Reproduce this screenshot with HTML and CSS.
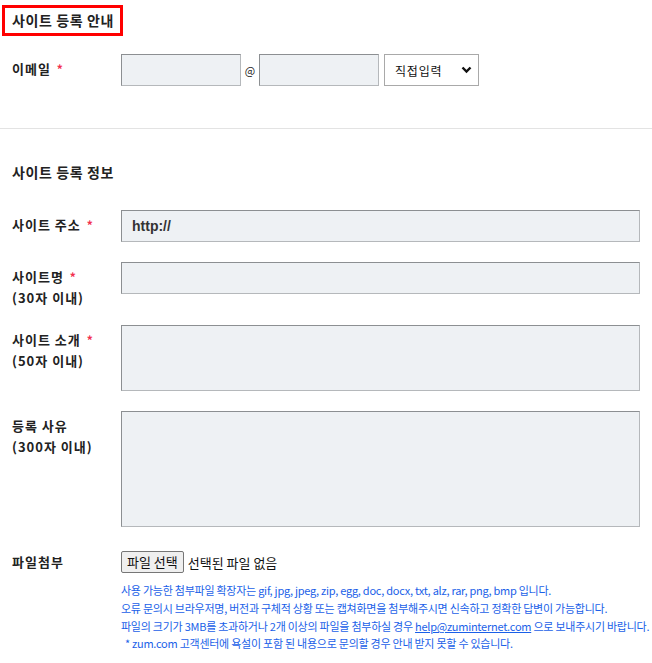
FILE: index.html
```html
<html>
<head>
<meta charset="utf-8">
<title>사이트 등록 안내</title>
<link rel="stylesheet" href="styles.css">
</head>
<body>
    <div class="section">
        <h2 class="titleBox">사이트 등록 안내</h2>
        <div class="formRow emailRow">
            <div class="label">이메일 <span class="req">*</span></div>
            <div class="field emailField">
                <div class="inputBox emailBox"></div>
                <span class="at">@</span>
                <div class="inputBox emailBox"></div>
                <div class="selectBox">
                    <span>직접입력</span>
                    <svg width="11" height="8" viewBox="0 0 11 8"><path d="M1.5 1.5 L5.5 5.5 L9.5 1.5" fill="none" stroke="#111" stroke-width="2.4"/></svg>
                </div>
            </div>
        </div>
    </div>

    <div class="divider"></div>

    <div class="section">
        <h3 class="subTitle">사이트 등록 정보</h3>

        <div class="formRow">
            <div class="label">사이트 주소 <span class="req">*</span></div>
            <div class="field"><div class="inputBox urlBox">http://</div></div>
        </div>

        <div class="formRow shortRow">
            <div class="label">사이트명 <span class="req">*</span><br>(30자 이내)</div>
            <div class="field"><div class="inputBox"></div></div>
        </div>

        <div class="formRow">
            <div class="label">사이트 소개 <span class="req">*</span><br>(50자 이내)</div>
            <div class="field"><div class="inputBox introBox"></div></div>
        </div>

        <div class="formRow">
            <div class="label">등록 사유<br>(300자 이내)</div>
            <div class="field"><div class="inputBox reasonBox"></div></div>
        </div>

        <div class="formRow fileRow">
            <div class="label">파일첨부</div>
            <div class="field">
                <div class="fileLine">
                    <span class="fileButton">파일 선택</span>
                    <span class="fileName">선택된 파일 없음</span>
                </div>
                <ul class="notice">
                    <li>사용 가능한 첨부파일 확장자는 gif, jpg, jpeg, zip, egg, doc, docx, txt, alz, rar, png, bmp 입니다.</li>
                    <li>오류 문의시 브라우저명, 버전과 구체적 상황 또는 캡쳐화면을 첨부해주시면 신속하고 정확한 답변이 가능합니다.</li>
                    <li>파일의 크기가 3MB를 초과하거나 2개 이상의 파일을 첨부하실 경우 <u>help@zuminternet.com</u> 으로 보내주시기 바랍니다.</li>
                    <li class="star">* zum.com 고객센터에 욕설이 포함 된 내용으로 문의할 경우 안내 받지 못할 수 있습니다.</li>
                </ul>
            </div>
        </div>
    </div>
</body>
</html>
```

FILE: styles.css
```css
body {
    margin: 0;
    background: #fff;
    color: #222;
    font-family: "Noto Sans CJK KR", "Liberation Sans", sans-serif;
}
.section {
    padding: 0 12px 0 0;
}
.titleBox {
    display: inline-block;
    margin: 5px 0 0 2px;
    padding: 0 6px 0 7px;
    height: 25px;
    line-height: 25px;
    border: 3px solid #f00;
    font-size: 14px;
    font-weight: bold;
    letter-spacing: 0.6px;
}
.subTitle {
    margin: 0;
    padding: 32px 0 0 12px;
    height: 49px;
    line-height: 22px;
    font-size: 14px;
    font-weight: bold;
    letter-spacing: 0.6px;
}
.formRow {
    display: grid;
    grid-template-columns: 121px 1fr;
    margin-bottom: 20px;
}
.emailRow {
    margin-top: 18px;
    margin-bottom: 0;
}
.shortRow {
    margin-bottom: 17px;
}
.label {
    padding: 4px 0 0 12px;
    font-size: 13px;
    font-weight: bold;
    line-height: 21px;
    letter-spacing: 1px;
}
.req {
    color: #f2304f;
    font-size: 12px;
    margin-left: 2px;
}
.inputBox {
    box-sizing: border-box;
    height: 32px;
    background: #eef1f4;
    border: 1px solid #b5b8bb;
    border-top-color: #8c8f92;
    border-left-color: #8c8f92;
}
.emailField {
    display: flex;
    align-items: center;
}
.emailBox {
    width: 120px;
}
.at {
    font-size: 11px;
    width: 18px;
    text-align: center;
}
.selectBox {
    box-sizing: border-box;
    width: 95px;
    height: 32px;
    margin-left: 5px;
    padding: 0 6px 0 10px;
    border: 1px solid #a9a9a9;
    display: flex;
    align-items: center;
    justify-content: space-between;
    font-size: 12px;
    letter-spacing: 0.8px;
    color: #111;
}
.urlBox {
    padding: 0 10px;
    line-height: 30px;
    font-family: "Liberation Sans", sans-serif;
    font-size: 14px;
    font-weight: bold;
    color: #333;
}
.introBox {
    height: 66px;
}
.reasonBox {
    height: 116px;
}
.fileRow {
    padding-top: 4px;
}
.fileRow .label {
    padding-top: 0;
}
.fileLine {
    display: flex;
    align-items: center;
    font-size: 13px;
    color: #111;
}
.fileButton {
    box-sizing: border-box;
    height: 22px;
    line-height: 20px;
    padding: 0 5px;
    background: #efefef;
    border: 1px solid #767676;
    border-radius: 2px;
    margin-right: 4px;
}
.notice {
    list-style: none;
    margin: 8px 0 0 0;
    padding: 0;
    font-size: 11px;
    line-height: 18px;
    color: #1a5fe8;
    white-space: nowrap;
    letter-spacing: -0.25px;
}
.notice .star {
    padding-left: 4px;
    line-height: 16px;
}
.divider {
    margin-top: 42px;
    height: 1px;
    background: #e3e3e3;
}
```
